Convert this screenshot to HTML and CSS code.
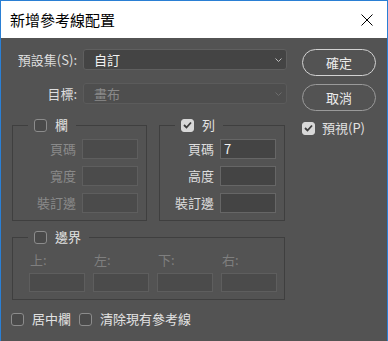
FILE: index.html
```html
<!DOCTYPE html>
<html lang="zh-Hant">
<head>
<meta charset="utf-8">
<link rel="stylesheet" href="styles.css">
</head>
<body>
<div class="dialog">
  <div class="titlebar">
    <span class="title">新增參考線配置</span>
    <svg class="close" width="12" height="12" viewBox="0 0 12 12"><path d="M0.5 0.5L11.5 11.5M11.5 0.5L0.5 11.5" stroke="#000" stroke-width="1" fill="none"/></svg>
  </div>
  <div class="body">
    <div class="main">
      <div class="form-grid">
        <span class="lbl">預設集(S):</span>
        <div class="select"><span>自訂</span><svg width="7" height="4" viewBox="0 0 7 4"><path d="M0.5 0.5L3.5 3.5L6.5 0.5" stroke="#bdbdbd" fill="none"/></svg></div>
        <span class="lbl">目標:</span>
        <div class="select disabled"><span>畫布</span><svg width="7" height="4" viewBox="0 0 7 4"><path d="M0.5 0.5L3.5 3.5L6.5 0.5" stroke="#6c6c6c" fill="none"/></svg></div>
      </div>
      <div class="groups">
        <fieldset class="group cols">
          <legend><span class="legend-in"><span class="cb"></span><span>欄</span></span></legend>
          <div class="fields">
            <div class="field"><span class="flabel dim">頁碼</span><span class="input off"></span></div>
            <div class="field"><span class="flabel dim">寬度</span><span class="input off"></span></div>
            <div class="field"><span class="flabel dim">裝訂邊</span><span class="input off"></span></div>
          </div>
        </fieldset>
        <fieldset class="group rows">
          <legend><span class="legend-in"><span class="cb checked"><svg width="9" height="8" viewBox="0 0 9 8"><path d="M1 4L3.5 6.5L8 1.5" stroke="#3c3c3c" stroke-width="1.8" fill="none"/></svg></span><span>列</span></span></legend>
          <div class="fields">
            <div class="field"><span class="flabel">頁碼</span><span class="input">7</span></div>
            <div class="field"><span class="flabel">高度</span><span class="input"></span></div>
            <div class="field"><span class="flabel">裝訂邊</span><span class="input"></span></div>
          </div>
        </fieldset>
      </div>
      <fieldset class="group margin">
        <legend><span class="legend-in"><span class="cb"></span><span>邊界</span></span></legend>
        <div class="mgrid">
          <div class="mcell"><span class="mlabel">上:</span><span class="input off wide"></span></div>
          <div class="mcell"><span class="mlabel">左:</span><span class="input off wide"></span></div>
          <div class="mcell"><span class="mlabel">下:</span><span class="input off wide"></span></div>
          <div class="mcell"><span class="mlabel">右:</span><span class="input off wide"></span></div>
        </div>
      </fieldset>
      <div class="bottom">
        <span class="check-item"><span class="cb"></span><span>居中欄</span></span>
        <span class="check-item"><span class="cb"></span><span>清除現有參考線</span></span>
      </div>
    </div>
    <div class="side">
      <div class="btn primary">確定</div>
      <div class="btn">取消</div>
      <div class="check-row"><span class="cb checked"><svg width="9" height="8" viewBox="0 0 9 8"><path d="M1 4L3.5 6.5L8 1.5" stroke="#3c3c3c" stroke-width="1.8" fill="none"/></svg></span><span>預視(P)</span></div>
    </div>
  </div>
</div>
</body>
</html>
```

FILE: styles.css
```css
html, body {
  margin: 0;
  padding: 0;
  background: #535353;
}
body {
  font-family: "Noto Sans CJK TC", "Noto Sans", sans-serif;
  font-size: 13px;
}
.dialog {
  width: 388px;
  height: 341px;
  box-sizing: border-box;
  border: 1px solid #2a7fd4;
  border-bottom: none;
  display: flex;
  flex-direction: column;
  overflow: hidden;
}
.titlebar {
  flex: none;
  height: 37px;
  background: #ffffff;
  display: flex;
  align-items: center;
  justify-content: space-between;
  padding: 0 14px 0 9px;
}
.title {
  font-size: 15px;
  color: #000;
  line-height: 18px;
}
.close {
  display: block;
}
.body {
  flex: 1;
  background: #535353;
  display: flex;
  padding-top: 11px;
}
.main {
  width: 286px;
  flex: none;
}
.form-grid {
  display: grid;
  grid-template-columns: 76px 204px;
  column-gap: 6px;
  row-gap: 13px;
}
.lbl {
  text-align: right;
  line-height: 21px;
  color: #dedede;
  white-space: nowrap;
}
.select {
  height: 21px;
  box-sizing: border-box;
  border: 1px solid #5f5f5f;
  border-radius: 3px;
  background: #444444;
  display: flex;
  align-items: center;
  justify-content: space-between;
  padding: 0 4px 0 10px;
  color: #f2f2f2;
  line-height: 19px;
}
.select svg {
  display: block;
}
.select.disabled {
  background: #4e4e4e;
  border-color: #5b5b5b;
  color: #8a8a8a;
}
.groups {
  display: flex;
  gap: 12px;
  margin: 14px 0 0 11px;
}
fieldset.group {
  margin: 0;
  padding: 0 8px 7px 0;
  border: 1px solid #3f3f3f;
  min-width: 0;
  box-sizing: border-box;
}
.cols {
  width: 135px;
}
.rows {
  width: 126px;
}
legend {
  margin-left: 15px;
  padding: 0 8px 0 6px;
}
.legend-in {
  display: flex;
  align-items: center;
  gap: 8px;
  height: 14px;
  color: #e2e2e2;
  line-height: 14px;
}
.fields {
  display: flex;
  flex-direction: column;
  align-items: flex-end;
  gap: 7px;
  padding-top: 7px;
}
.field {
  display: flex;
  align-items: center;
  gap: 6px;
}
.flabel {
  color: #dedede;
  line-height: 16px;
}
.dim {
  color: #8a8a8a;
}
.input {
  display: block;
  width: 56px;
  height: 20px;
  box-sizing: border-box;
  border: 1px solid #666666;
  background: #444444;
  color: #f2f2f2;
  padding-left: 3px;
  line-height: 18px;
}
.input.off {
  border-color: #5e5e5e;
  background: #4b4b4b;
}
fieldset.margin {
  width: 273px;
  margin: 9px 0 0 11px;
  padding: 0 0 7px 0;
}
.mgrid {
  display: grid;
  grid-template-columns: repeat(4, 56px);
  column-gap: 8px;
  padding: 8px 0 0 16px;
}
.mcell {
  display: flex;
  flex-direction: column;
  gap: 5px;
}
.mlabel {
  color: #7f7f7f;
  line-height: 16px;
  padding-left: 1px;
}
.input.wide {
  height: 19px;
}
.bottom {
  display: flex;
  align-items: center;
  gap: 8px;
  margin: 11px 0 0 10px;
}
.check-item {
  display: flex;
  align-items: center;
  gap: 8px;
  color: #e2e2e2;
  line-height: 16px;
}
.cb {
  flex: none;
  width: 13px;
  height: 13px;
  box-sizing: border-box;
  border: 1px solid #8c8c8c;
  border-radius: 3px;
  background: #4a4a4a;
  display: flex;
  align-items: center;
  justify-content: center;
}
.cb.checked {
  background: #d8d8d8;
  border-color: #d8d8d8;
}
.cb svg {
  display: block;
}
.side {
  margin-left: 15px;
  width: 74px;
  display: flex;
  flex-direction: column;
  gap: 8px;
}
.btn {
  height: 27px;
  box-sizing: border-box;
  border: 1px solid #9a9a9a;
  border-radius: 14px;
  display: flex;
  align-items: center;
  justify-content: center;
  color: #ececec;
  line-height: 16px;
}
.btn.primary {
  border-color: #d2d2d2;
}
.check-row {
  display: flex;
  align-items: center;
  gap: 7px;
  color: #e2e2e2;
  line-height: 16px;
  height: 16px;
  margin-top: 1px;
}
```
